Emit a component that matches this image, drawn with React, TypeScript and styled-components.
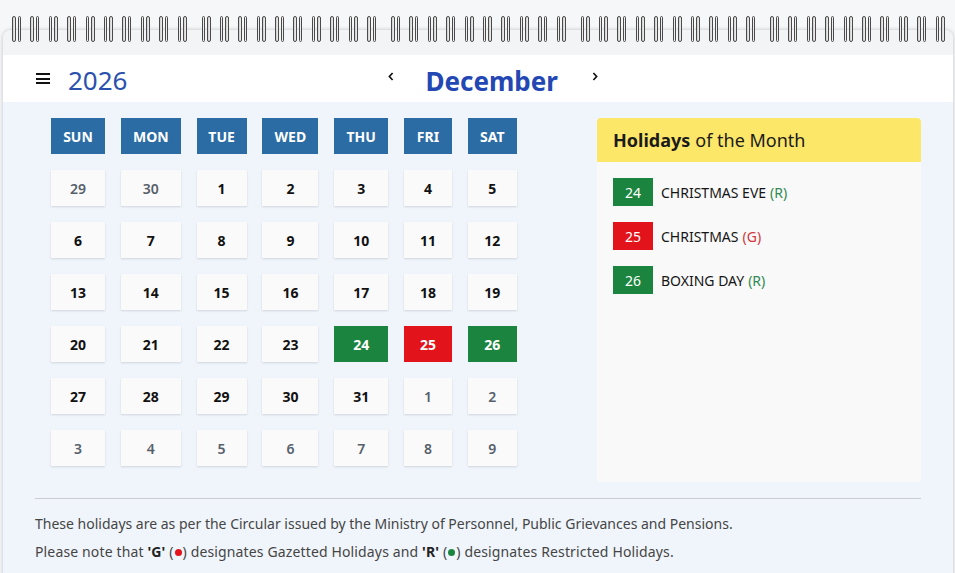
import React from "react";
import styled, { createGlobalStyle } from "styled-components";

const GlobalStyle = createGlobalStyle`
  html, body { margin: 0; padding: 0; background: #f6f7f8; }
  body { font-family: "Noto Sans", "Open Sans", sans-serif; overflow: hidden; }
  #root { padding: 30px 2px 0 3px; }
`;

const Card = styled.div`
  position: relative;
  background: #f0f5fc;
  border-radius: 8px 8px 0 0;
  box-shadow: 0 0 4px rgba(0, 0, 0, 0.22);
  min-height: 560px;
`;

const RingBand = styled.div`
  height: 25px;
  background: #f3f4f6;
  border-radius: 8px 8px 0 0;
`;

const Rings = styled.div`
  position: absolute;
  top: -14px;
  left: 9px;
  display: flex;
  gap: 15px;
`;

const RingGroup = styled.div`
  display: flex;
  gap: 9.4px;
`;

const RingPair = styled.div`
  display: flex;
  gap: 2px;
`;

const Ring = styled.span`
  display: block;
  width: 1.5px;
  height: 24px;
  border: 1px solid #4a4a4a;
  border-radius: 3px;
  background: linear-gradient(to right, #bdbdbd, #f7f7f7 60%, #d0d0d0);
`;

const Header = styled.header`
  height: 47px;
  background: #ffffff;
  display: flex;
  align-items: center;
  padding-left: 33px;
`;

const Burger = styled.div`
  display: flex;
  flex-direction: column;
  gap: 2.5px;
  width: 14px;
  margin-right: 18px;
  span {
    display: block;
    height: 2px;
    background: #111;
  }
`;

const Year = styled.div`
  font-size: 26px;
  color: #2b50ad;
  line-height: 1;
  margin-top: 2px;
`;

const MonthNav = styled.nav`
  display: flex;
  align-items: center;
  margin-left: 259px;
`;

const Arrow = styled.button`
  border: 0;
  background: none;
  padding: 0;
  width: 8px;
  display: flex;
  align-items: center;
  justify-content: center;
  cursor: pointer;
  margin-top: -4px;
`;

const Month = styled.h1`
  margin: 0 33px 0 31px;
  font-size: 26px;
  font-weight: 700;
  color: #2347b3;
  line-height: 1;
  margin-top: 4px;
`;

const Body = styled.main`
  padding: 16px 32px 0;
`;

const Row = styled.div`
  display: flex;
  align-items: stretch;
`;

const CalendarSide = styled.section`
  width: 546px;
  padding: 0 0 16px 16px;
`;

const Grid = styled.div`
  display: grid;
  grid-template-columns: 54px 60px 50px 56px 54px 48px 49px;
  grid-auto-rows: 36px;
  column-gap: 15.8px;
  row-gap: 16px;
`;

const DayHead = styled.div`
  background: #2b6ca5;
  color: #ffffff;
  font-weight: 700;
  font-size: 14px;
  display: flex;
  align-items: center;
  justify-content: center;
`;

const Day = styled.div<{ $kind: "cur" | "other" | "R" | "G" }>`
  display: flex;
  align-items: center;
  justify-content: center;
  font-size: 14px;
  font-weight: ${(p) => (p.$kind === "other" ? 600 : 700)};
  color: ${(p) =>
    p.$kind === "other" ? "#56606b" : p.$kind === "cur" ? "#111111" : "#ffffff"};
  background: ${(p) =>
    p.$kind === "R" ? "#1b8540" : p.$kind === "G" ? "#e3131b" : "#fafafa"};
  box-shadow: ${(p) =>
    p.$kind === "R" || p.$kind === "G" ? "none" : "0 1px 2px rgba(0,0,0,0.13)"};
`;

const Panel = styled.aside`
  flex: 1;
  background: #f9f9f9;
  border-radius: 4px;
  overflow: hidden;
`;

const PanelHead = styled.h2`
  margin: 0;
  height: 44px;
  background: #fde769;
  display: flex;
  align-items: center;
  padding: 0 16px;
  font-size: 18px;
  font-weight: 400;
  color: #1b1b1b;
  b { font-weight: 700; margin-right: 5px; }
`;

const HolidayList = styled.ul`
  list-style: none;
  margin: 0;
  padding: 16px;
  display: flex;
  flex-direction: column;
  gap: 16px;
`;

const HolidayItem = styled.li`
  display: flex;
  align-items: center;
  gap: 8px;
  font-size: 14px;
  color: #151515;
`;

const Badge = styled.span<{ $type: "R" | "G" }>`
  width: 40px;
  height: 28px;
  display: flex;
  align-items: center;
  justify-content: center;
  color: #fff;
  font-size: 14px;
  background: ${(p) => (p.$type === "G" ? "#e3131b" : "#1b8540")};
`;

const Tag = styled.span<{ $type: "R" | "G" }>`
  margin-left: 4px;
  color: ${(p) => (p.$type === "G" ? "#d2363a" : "#2e8a50")};
`;

const Divider = styled.hr`
  margin: 16px 0 0;
  border: 0;
  border-top: 1px solid #c9ccd0;
`;

const Footer = styled.footer`
  padding-top: 15px;
  b { color: #222; font-weight: 700; }
`;

const Note = styled.p<{ $spread?: boolean }>`
  margin: 0 0 8px;
  font-size: 14px;
  line-height: 20px;
  color: #454545;
  letter-spacing: ${(p) => (p.$spread ? "0.14px" : "0")};
`;

const Dot = styled.span<{ $c: string }>`
  display: inline-block;
  width: 7px;
  height: 7px;
  margin: 0 1px;
  border-radius: 50%;
  background: ${(p) => p.$c};
  vertical-align: 1px;
`;

const Chevron = ({ dir }: { dir: "l" | "r" }) => (
  <svg width="6" height="9" viewBox="0 0 6 9">
    <path
      d={dir === "l" ? "M4.6 1 L1.4 4.5 L4.6 8" : "M1.4 1 L4.6 4.5 L1.4 8"}
      fill="none"
      stroke="#111"
      strokeWidth="1.7"
    />
  </svg>
);

const heads = ["SUN", "MON", "TUE", "WED", "THU", "FRI", "SAT"];

type Kind = "cur" | "other" | "R" | "G";
const holidayKinds: Record<number, Kind> = { 24: "R", 25: "G", 26: "R" };

const days: { n: number; k: Kind }[] = [];
[29, 30].forEach((n) => days.push({ n, k: "other" }));
for (let i = 1; i <= 31; i++) days.push({ n: i, k: holidayKinds[i] || "cur" });
for (let i = 1; i <= 9; i++) days.push({ n: i, k: "other" });

const holidays: { d: number; name: string; t: "R" | "G" }[] = [
  { d: 24, name: "CHRISTMAS EVE", t: "R" },
  { d: 25, name: "CHRISTMAS", t: "G" },
  { d: 26, name: "BOXING DAY", t: "R" },
];

export default function App() {
  return (
    <>
      <GlobalStyle />
      <Card>
        <Rings>
          {Array.from({ length: 5 }).map((_, g) => (
            <RingGroup key={g}>
              {Array.from({ length: 10 }).map((_, i) => (
                <RingPair key={i}>
                  <Ring />
                  <Ring />
                </RingPair>
              ))}
            </RingGroup>
          ))}
        </Rings>
        <RingBand />
        <Header>
          <Burger>
            <span />
            <span />
            <span />
          </Burger>
          <Year>2026</Year>
          <MonthNav>
            <Arrow aria-label="Previous month">
              <Chevron dir="l" />
            </Arrow>
            <Month>December</Month>
            <Arrow aria-label="Next month">
              <Chevron dir="r" />
            </Arrow>
          </MonthNav>
        </Header>
        <Body>
          <Row>
            <CalendarSide>
              <Grid>
                {heads.map((h) => (
                  <DayHead key={h}>{h}</DayHead>
                ))}
                {days.map((d, i) => (
                  <Day key={i} $kind={d.k}>
                    {d.n}
                  </Day>
                ))}
              </Grid>
            </CalendarSide>
            <Panel>
              <PanelHead>
                <b>Holidays</b> of the Month
              </PanelHead>
              <HolidayList>
                {holidays.map((h) => (
                  <HolidayItem key={h.d}>
                    <Badge $type={h.t}>{h.d}</Badge>
                    <span>
                      {h.name}
                      <Tag $type={h.t}>({h.t})</Tag>
                    </span>
                  </HolidayItem>
                ))}
              </HolidayList>
            </Panel>
          </Row>
          <Divider />
          <Footer>
            <Note>
              These holidays are as per the Circular issued by the Ministry of Personnel, Public
              Grievances and Pensions.
            </Note>
            <Note $spread>
              Please note that <b>'G'</b> (<Dot $c="#e3131b" />) designates Gazetted Holidays and{" "}
              <b>'R'</b> (<Dot $c="#1b8540" />) designates Restricted Holidays.
            </Note>
          </Footer>
        </Body>
      </Card>
    </>
  );
}
